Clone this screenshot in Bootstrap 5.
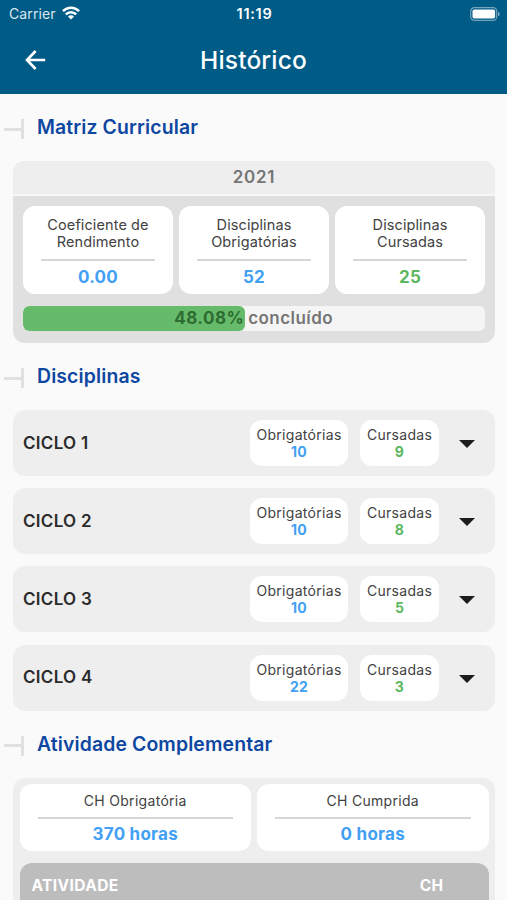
<!DOCTYPE html>
<html lang="pt-BR">
<head>
<meta charset="utf-8">
<meta name="viewport" content="width=device-width, initial-scale=1">
<title>Histórico</title>
<link href="https://cdn.jsdelivr.net/npm/bootstrap@5.3.0/dist/css/bootstrap.min.css" rel="stylesheet">
<style>
body{font-family:Inter,"Liberation Sans",sans-serif;background:#fafafa;color:#424242;font-size:14px;letter-spacing:.3px;line-height:17px;height:900px;overflow:hidden}
.app-head{background:#005b87;height:94px;color:#fff}
.status-bar{height:27px;padding:0 7px 0 9px}
.status-bar>*{flex:1 1 0}
.carrier{font-size:14px;letter-spacing:.1px;color:#d9e8ef}
.carrier svg{margin-left:6px;margin-top:-1px}
.clock{font-size:14.5px;font-weight:600;letter-spacing:.7px}
.title-bar{height:66px}
.title-bar>*{flex:1 1 0}
.title-bar h1{font-size:24.5px;font-weight:500;letter-spacing:.15px;line-height:30px}
.back{margin-left:25px}
.sec-title{height:30px;padding-left:4px;margin:19px 0 18px;color:#0d47a1}
.sec-title h2{font-size:19.4px;font-weight:600;letter-spacing:.13px;line-height:24px;padding:0 0 2px 13px}
.tick{width:20px;height:20px;margin-top:2px;border-right:3px solid #e0e0e0}
.tick::before{content:"";width:17px;height:3px;background:#e0e0e0}
.panel{margin:0 12px 0 13px;border-radius:12px}
.panel-year{height:35px;background:#eee;border-bottom:2px solid #f7f7f7;border-radius:12px 12px 0 0;font-size:17px;font-weight:600;letter-spacing:.75px;color:#757575}
.matrix{background:#e0e0e0;height:182px}
.matrix-row{gap:6px;padding:10px 10px 12px}
.tile{background:#fff;border-radius:12px;flex:1 1 0;text-align:center}
.tile-line{height:2px;background:#d6d6d6}
.stat{font-size:17px;font-weight:700;line-height:20px;letter-spacing:.25px}
.stat-tile{height:88px;padding-top:10px;font-size:14.5px;letter-spacing:.1px}
.stat-tile .tile-line{margin:9px 18px 5.5px}
.hour-tile{height:67px;padding-top:8px}
.hour-tile .tile-line{margin:8px 18px 5px}
.blue{color:#42a0f5}
.green{color:#5cb860}
.done{width:462px;height:25px;background:#f5f5f5;border-radius:6px;font-size:17px;font-weight:700;letter-spacing:.45px}
.done .progress-bar{background:#66bb6a;border-radius:6px;color:#2e6b32;text-align:right;padding-right:1px;font-weight:700}
.done-rest{padding-left:3px;color:#757575;font-weight:600}
.cycle{height:66px;background:#eee;padding:0 20px 0 10px;margin-bottom:12.2px}
.cycle-name{font-size:17px;font-weight:600;color:#2b2b2b}
.pill{height:46px;background:#fff;border-radius:12px;text-align:center;padding-top:6px}
.pill b{display:block;font-weight:700}
.wide-pill{width:98px;margin-right:12px}
.slim-pill{width:79px;margin-right:20px}
.caret-icon{margin-top:2px}
.hours{background:#eee;height:140px;padding:6px 6.5px 0}
.hour-row{gap:6px;margin-bottom:12px}
.table-top{background:#bdbdbd;border-radius:12px 12px 0 0;height:60px;color:#fff;font-size:15.5px;letter-spacing:.4px;font-weight:700;padding:14px 45px 0 12px}
</style>
</head>
<body>
<header class="app-head">
  <div class="status-bar d-flex align-items-center">
    <div class="carrier d-flex align-items-center">Carrier
      <svg width="18" height="14" viewBox="0 0 18 14" fill="none" stroke="#fff" stroke-width="2.5"><path d="M.9 5.2C5.5.6 12.5.6 17.1 5.2M3.8 8.4c3-3 7.4-3 10.4 0"/><path d="M9 13.6 5.9 10.5c1.7-1.6 4.5-1.6 6.2 0z" fill="#fff" stroke="none"/></svg>
    </div>
    <div class="clock text-center">11:19</div>
    <div class="d-flex justify-content-end"><svg width="30" height="14" viewBox="0 0 30 14"><rect x=".7" y=".7" width="26" height="12.6" rx="3.6" fill="none" stroke="#fff" stroke-opacity=".45" stroke-width="1.2"/><rect x="2.5" y="2.4" width="22.6" height="9.2" rx="1.8" fill="#fff"/><path d="M28 4.7q1.7.6 1.7 2.3T28 9.3z" fill="#fff" fill-opacity=".5"/></svg></div>
  </div>
  <div class="title-bar d-flex align-items-center">
    <div><svg class="back d-block" width="21" height="20" viewBox="0 0 21 20" fill="none" stroke="#fff" stroke-width="2.6"><path d="M10.6 1 2 10l8.6 9M2 10h18.2"/></svg></div>
    <h1 class="m-0 text-center">Histórico</h1>
    <div></div>
  </div>
</header>
<main class="d-flow-root">
  <div class="sec-title d-flex align-items-center"><i class="tick d-flex align-items-center"></i><h2 class="m-0">Matriz Curricular</h2></div>
  <section class="panel matrix">
    <div class="panel-year d-flex align-items-center justify-content-center">2021</div>
    <div class="matrix-row d-flex">
      <div class="tile stat-tile">Coeficiente de<br>Rendimento<div class="tile-line"></div><div class="stat blue">0.00</div></div>
      <div class="tile stat-tile">Disciplinas<br>Obrigatórias<div class="tile-line"></div><div class="stat blue">52</div></div>
      <div class="tile stat-tile">Disciplinas<br>Cursadas<div class="tile-line"></div><div class="stat green">25</div></div>
    </div>
    <div class="done progress mx-auto">
      <div class="progress-bar" style="width:48.08%">48.08%</div><span class="done-rest d-flex align-items-center">concluído</span>
    </div>
  </section>
  <div class="sec-title d-flex align-items-center"><i class="tick d-flex align-items-center"></i><h2 class="m-0">Disciplinas</h2></div>
  <section class="panel cycle d-flex align-items-center"><div class="cycle-name me-auto">CICLO 1</div><div class="pill wide-pill">Obrigatórias<b class="blue">10</b></div><div class="pill slim-pill">Cursadas<b class="green">9</b></div><svg class="caret-icon" width="16" height="8" viewBox="0 0 16 8"><path d="M0 0h16L8 8z" fill="#1c1c1c"/></svg></section>
  <section class="panel cycle d-flex align-items-center"><div class="cycle-name me-auto">CICLO 2</div><div class="pill wide-pill">Obrigatórias<b class="blue">10</b></div><div class="pill slim-pill">Cursadas<b class="green">8</b></div><svg class="caret-icon" width="16" height="8" viewBox="0 0 16 8"><path d="M0 0h16L8 8z" fill="#1c1c1c"/></svg></section>
  <section class="panel cycle d-flex align-items-center"><div class="cycle-name me-auto">CICLO 3</div><div class="pill wide-pill">Obrigatórias<b class="blue">10</b></div><div class="pill slim-pill">Cursadas<b class="green">5</b></div><svg class="caret-icon" width="16" height="8" viewBox="0 0 16 8"><path d="M0 0h16L8 8z" fill="#1c1c1c"/></svg></section>
  <section class="panel cycle d-flex align-items-center"><div class="cycle-name me-auto">CICLO 4</div><div class="pill wide-pill">Obrigatórias<b class="blue">22</b></div><div class="pill slim-pill">Cursadas<b class="green">3</b></div><svg class="caret-icon" width="16" height="8" viewBox="0 0 16 8"><path d="M0 0h16L8 8z" fill="#1c1c1c"/></svg></section>
  <div class="sec-title d-flex align-items-center"><i class="tick d-flex align-items-center"></i><h2 class="m-0">Atividade Complementar</h2></div>
  <section class="panel hours">
    <div class="hour-row d-flex">
      <div class="tile hour-tile">CH Obrigatória<div class="tile-line"></div><div class="stat blue">370 horas</div></div>
      <div class="tile hour-tile">CH Cumprida<div class="tile-line"></div><div class="stat blue">0 horas</div></div>
    </div>
    <div class="table-top d-flex justify-content-between"><span>ATIVIDADE</span><span>CH</span></div>
  </section>
</main>
<script src="https://cdn.jsdelivr.net/npm/bootstrap@5.3.0/dist/js/bootstrap.bundle.min.js"></script>
</body>
</html>
